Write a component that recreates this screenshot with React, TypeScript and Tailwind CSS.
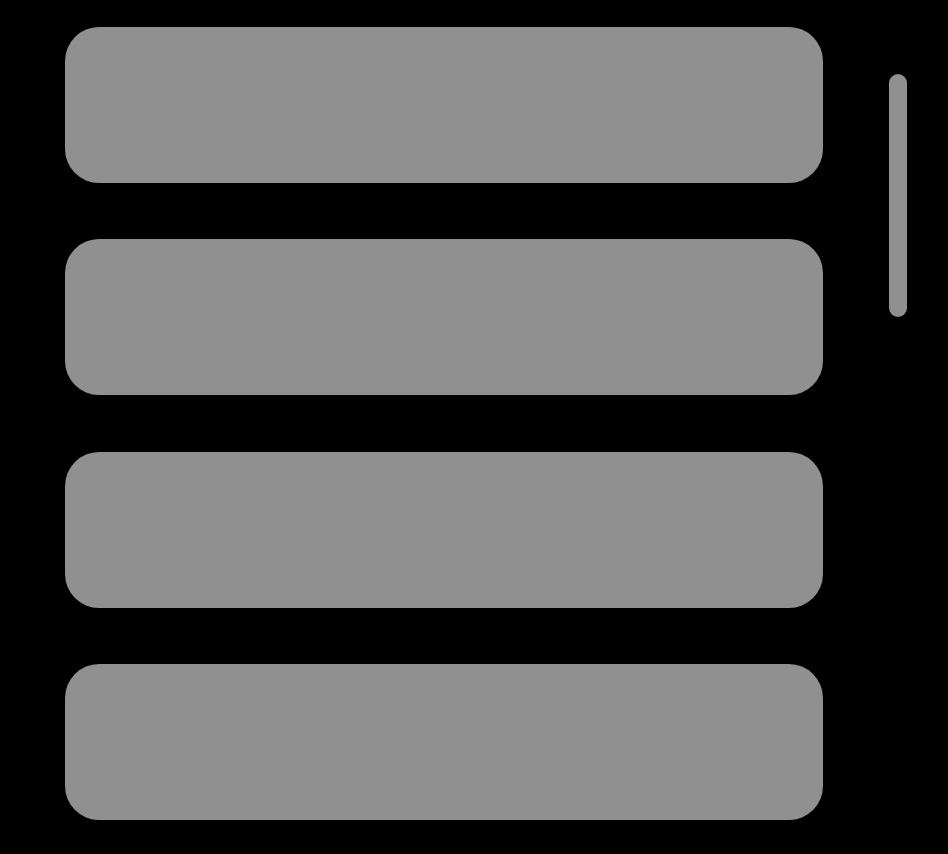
import React from 'react';

const rows = [0, 1, 2, 3];

export default function App() {
  return (
    <div className="w-[948px] h-[854px] bg-black flex overflow-hidden">
      <div className="flex flex-col gap-[56.33px] pt-[27px] pl-[65px]">
        {rows.map((i) => (
          <div key={i} className="w-[758px] h-[156px] rounded-[34px] bg-[#909090]" />
        ))}
      </div>
      <div className="ml-[66px] mt-[74px] w-[17.5px] h-[243px] rounded-full bg-[#909090]" />
    </div>
  );
}
